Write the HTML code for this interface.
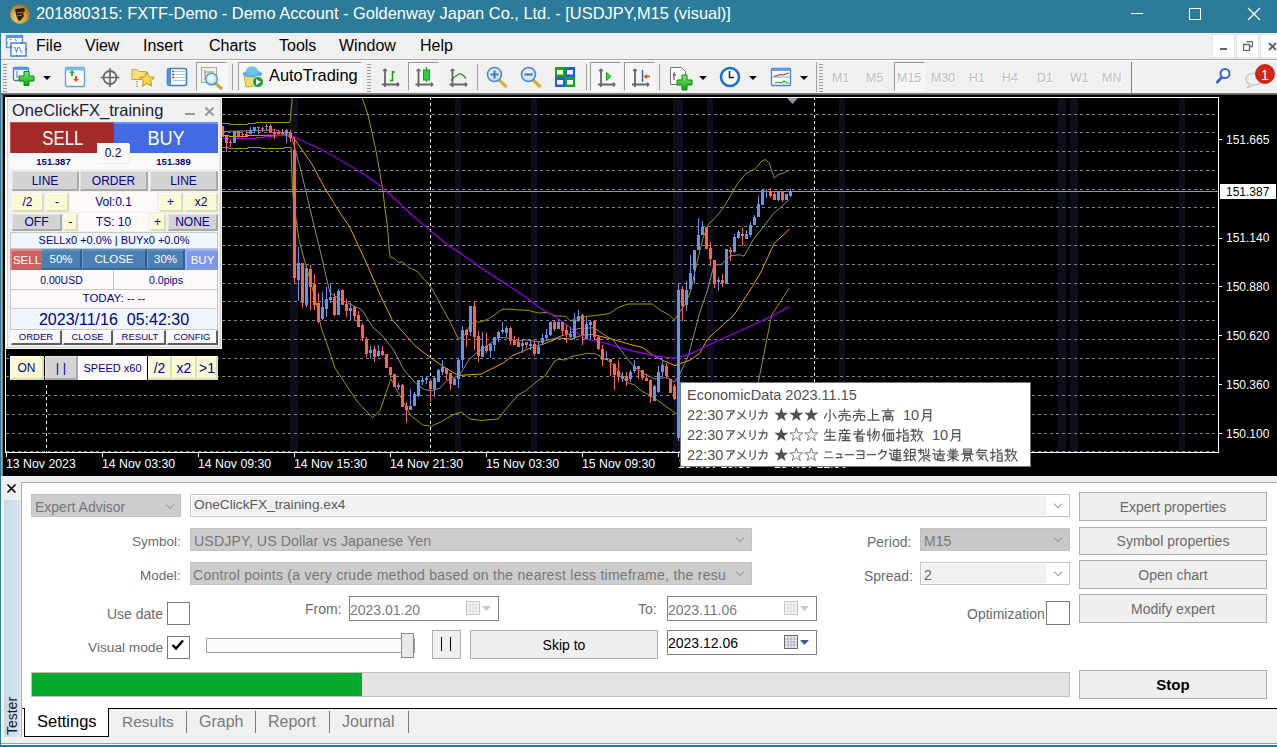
<!DOCTYPE html>
<html><head><meta charset="utf-8">
<style>
*{box-sizing:border-box;margin:0;padding:0}
html,body{width:1277px;height:747px;overflow:hidden;background:#f0f0f0;font-family:"Liberation Sans",sans-serif;position:relative}
.a{position:absolute}
.t{position:absolute;white-space:pre;line-height:1}
#title{left:0;top:0;width:1277px;height:33px;background:#2d7b9a;color:#fff}
#menu{left:0;top:33px;width:1277px;height:27px;background:#f0f0f0;border-bottom:1px solid #a8a8a8}
#tb{left:0;top:60px;width:1277px;height:34px;background:#f0f0f0;border-top:1px solid #fff;border-bottom:1px solid #787878}
#chart{left:3px;top:95px;width:1274px;height:381px;background:#000;overflow:hidden}
#tester{left:0;top:476px;width:1277px;height:271px;background:#f0f0f0}
.lb{position:absolute;left:0;top:0;width:1px;height:747px;background:#2d7b9a}
.m{font-size:16px;color:#000;top:5px}
.pb{position:absolute;border:1px solid;border-color:#9a9a9a #fafafa #fafafa #9a9a9a;background:#f5f5f5}
.grip{position:absolute;width:4px;background:repeating-linear-gradient(#9a9a9a 0 1px,transparent 1px 3px)}
.sep{position:absolute;width:1px;background:#a0a0a0;top:64px;height:26px}
.tf{position:absolute;top:72px;font-size:12.5px;color:#bdbdbd;white-space:pre;line-height:1;text-shadow:1px 1px 0 #fff}
.dd{position:absolute;width:0;height:0;border-left:4px solid transparent;border-right:4px solid transparent;border-top:4px solid #000}
</style></head><body>
<!-- TITLE -->
<div id="title" class="a">
 <svg class="a" style="left:9px;top:3px" width="22" height="22" viewBox="0 0 22 22">
  <defs><radialGradient id="gc" cx="0.4" cy="0.65" r="0.7"><stop offset="0" stop-color="#f3dc7c"/><stop offset="0.6" stop-color="#c99a3a"/><stop offset="1" stop-color="#8a6420"/></radialGradient></defs>
  <circle cx="11" cy="11" r="10" fill="url(#gc)"/>
  <path d="M6 6 L15 5 L16 8 L14 10 L15 13 L12 17 L10 18 L8 15 L7 11 Z" fill="#2a1a0a"/>
  <path d="M8 10 L14 9 M8 13 L13 12" stroke="#b08030" stroke-width="1"/>
 </svg>
 <div class="t" style="left:36px;top:5px;font-size:16.4px;color:#fff">201880315: FXTF-Demo - Demo Account - Goldenway Japan Co., Ltd. - [USDJPY,M15 (visual)]</div>
 <div class="a" style="left:1131px;top:13px;width:12px;height:1px;background:#fff"></div>
 <div class="a" style="left:1189px;top:8px;width:12px;height:12px;border:1px solid #fff"></div>
 <svg class="a" style="left:1247px;top:7px" width="14" height="14"><path d="M1 1 L13 13 M13 1 L1 13" stroke="#fff" stroke-width="1.2"/></svg>
</div>
<!-- MENU -->
<div id="menu" class="a">
 <svg class="a" style="left:2px;top:0px" width="28" height="26">
  <rect x="4.5" y="2.5" width="16" height="12" fill="#fff" stroke="#5a8ef0" stroke-width="1.4"/>
  <rect x="4" y="2" width="17" height="3" fill="#5a8ef0"/>
  <path d="M8 2.5 V4.5 M13 2.5 V4.5 M20.5 6 V8 M5 9 V11" stroke="#3a9a60" stroke-width="1"/>
  <path d="M7.5 6.5 h2 M13 6 l1.5 2" stroke="#5a8ef0" stroke-width="1.2"/>
  <rect x="9" y="10" width="15" height="13" fill="#fff" stroke="#5a8ef0" stroke-width="1.7"/>
  <path d="M9 13 V15 M14 22.8 H16 M19 10 H21 M24 15 V17" stroke="#3a8a60" stroke-width="1.6"/>
  <path d="M11.5 14.5 h1.5 l1.5 4.5 l1.5 -4.5 h1.5 l1.5 4.5 h2" stroke="#5a8ef0" stroke-width="1.1" fill="none"/>
 </svg>
 <div class="t m" style="left:36px">File</div>
 <div class="t m" style="left:85px">View</div>
 <div class="t m" style="left:143px">Insert</div>
 <div class="t m" style="left:209px">Charts</div>
 <div class="t m" style="left:279px">Tools</div>
 <div class="t m" style="left:339px">Window</div>
 <div class="t m" style="left:420px">Help</div>
 <div class="a" style="left:1212px;top:1px;width:23px;height:24px;background:#fff;border:1px solid #e4e4e4"></div>
 <div class="a" style="left:1236px;top:1px;width:23px;height:24px;background:#fff;border:1px solid #e4e4e4"></div>
 <div class="a" style="left:1260px;top:1px;width:20px;height:24px;background:#fff;border:1px solid #e4e4e4"></div>
 <div class="a" style="left:1220px;top:15px;width:7px;height:2px;background:#5a6878"></div>
 <svg class="a" style="left:1243px;top:8px" width="10" height="10"><path d="M3.5 0.5 H9.5 V5.5 H7 M0.5 3.5 H6.5 V9.5 H0.5 Z" stroke="#5a6878" stroke-width="1.3" fill="none"/></svg>
 <svg class="a" style="left:1268px;top:9px" width="9" height="9"><path d="M1 1 L8 8 M8 1 L1 8" stroke="#5a6878" stroke-width="2"/></svg>
</div>
<!-- TOOLBAR -->
<div id="tb" class="a"></div>
<div class="grip" style="left:3px;top:64px;height:28px"></div>
<div class="grip" style="left:367px;top:64px;height:28px"></div>
<div class="grip" style="left:819px;top:64px;height:28px"></div>
<div class="sep" style="left:232px"></div>
<div class="sep" style="left:477px"></div>
<div class="sep" style="left:586px"></div>
<div class="sep" style="left:659px"></div>
<div class="sep" style="left:816px;top:62px;height:30px"></div>
<div class="sep" style="left:1131px;top:62px;height:32px;background:#808080"></div>
<!-- pressed buttons -->
<div class="pb" style="left:196px;top:62px;width:31px;height:29px"></div>
<div class="pb" style="left:238px;top:62px;width:124px;height:29px"></div>
<div class="pb" style="left:408px;top:62px;width:31px;height:29px"></div>
<div class="pb" style="left:590px;top:62px;width:31px;height:29px"></div>
<div class="pb" style="left:624px;top:62px;width:31px;height:29px"></div>
<div class="pb" style="left:894px;top:62px;width:31px;height:29px"></div>
<div id="icons"><svg class="a" style="left:0;top:0" width="1277" height="94">
<defs>
<linearGradient id="gp" x1="0" y1="0" x2="0" y2="1"><stop offset="0" stop-color="#7cf07c"/><stop offset="1" stop-color="#10a010"/></linearGradient>
<radialGradient id="gm" cx="0.45" cy="0.4" r="0.6"><stop offset="0" stop-color="#ffffff"/><stop offset="1" stop-color="#b8dcf4"/></radialGradient>
</defs>
<!-- new chart -->
<rect x="13.5" y="67.5" width="15" height="13" rx="1.5" fill="#f4f8fc" stroke="#3c7cd0" stroke-width="1.3"/>
<rect x="13.5" y="67.5" width="15" height="2.5" fill="#5a9ae8"/>
<path d="M17 71 V78" stroke="#7090b0" stroke-width="1.2"/>
<path d="M19 76 H24 V71.5 H29 V76 H34 V81 H29 V85.5 H24 V81 H19 Z" fill="url(#gp)" stroke="#0a8a0a" stroke-width="1"/>
<!-- market watch -->
<rect x="65.5" y="67.5" width="19" height="19" rx="2" fill="#fff" stroke="#60a0e0" stroke-width="1.4"/>
<rect x="65.5" y="67.5" width="19" height="3" fill="#80b8f0"/>
<path d="M69 73 l3 -3 l3 3 h-2 v3 h-2 v-3 z" fill="#20b020"/>
<path d="M73 79 l3 3 l3 -3 h-2 v-3 h-2 v3 z" fill="#e05020"/>
<path d="M70 82 H82 M76 74 H82 M70 78 H74" stroke="#e0e0e0" stroke-width="0.8"/>
<!-- crosshair -->
<circle cx="110" cy="77.5" r="6.5" fill="none" stroke="#666" stroke-width="1.8"/>
<path d="M100.5 77.5 H119.5 M110 68 V87" stroke="#666" stroke-width="1.6"/>
<!-- folder star -->
<path d="M132 69.5 h5 l2 2 h7 v8 h-14 z" fill="#f4e07a" stroke="#c8a840" stroke-width="1"/>
<path d="M147 72 l2.3 4.8 5.2 0.6 -3.9 3.5 1.1 5.2 -4.7 -2.7 -4.7 2.7 1.1 -5.2 -3.9 -3.5 5.2 -0.6z" fill="#f6d64a" stroke="#c09020" stroke-width="1"/>
<path d="M137 81 V88" stroke="#444" stroke-width="1" stroke-dasharray="1 1.5"/>
<!-- terminal -->
<rect x="167.5" y="68.5" width="19" height="17" rx="2" fill="#fff" stroke="#3c7cd0" stroke-width="1.6"/>
<rect x="167.5" y="68.5" width="3.5" height="17" fill="#5090d8"/>
<path d="M173 71.5 H185 M173 74.5 H185 M173 77.5 H185 M173 80.5 H185" stroke="#a8c8f0" stroke-width="1"/>
<path d="M172 71.5 h2 M172 77.5 h2" stroke="#e03030" stroke-width="1.3"/>
<path d="M172 74.5 h2" stroke="#305030" stroke-width="1.3"/>
<!-- tester -->
<rect x="201.5" y="67.5" width="15" height="15" fill="#f4f0e8" stroke="#b0a890" stroke-width="1"/>
<path d="M205 70 V80 M205 72 H214" stroke="#8a8a8a" stroke-width="1"/>
<path d="M215 83 L222 89" stroke="#d0a820" stroke-width="3"/>
<circle cx="211.5" cy="79" r="5.8" fill="url(#gm)" stroke="#5a9ad0" stroke-width="1.5"/>
<!-- autotrading -->
<path d="M244 76 L258 76 L256 86 L246 87 Z" fill="#f2dc5a" stroke="#b89a30" stroke-width="0.8"/>
<ellipse cx="252.5" cy="74" rx="10" ry="3.5" fill="#5ab0e0"/>
<ellipse cx="252" cy="71" rx="6" ry="4.5" fill="#70c0ec"/>
<circle cx="258" cy="82" r="5.5" fill="#18a030" stroke="#fff" stroke-width="0.8"/>
<path d="M256 79 L261 82 L256 85 Z" fill="#fff"/>
<!-- bar chart -->
<path d="M385 70 V87 M382 84.5 H399" stroke="#666" stroke-width="1.8"/>
<path d="M383 71 l2 -2 l2 2 M397 82.5 l2 2 l-2 2" stroke="#666" stroke-width="1.2" fill="none"/>
<path d="M392.5 71 V81.5 M392.5 72 h2.5 M390 80.5 h2.5" stroke="#18a018" stroke-width="1.5"/>
<!-- candle -->
<path d="M418.5 70 V87 M415.5 84.5 H433" stroke="#666" stroke-width="1.8"/>
<path d="M416.5 71 l2 -2 l2 2 M431 82.5 l2 2 l-2 2" stroke="#666" stroke-width="1.2" fill="none"/>
<path d="M426.5 67 V82" stroke="#10a010" stroke-width="1.2"/>
<rect x="423.5" y="70" width="6" height="10" fill="#30d040" stroke="#10a010" stroke-width="1"/>
<!-- line -->
<path d="M452.5 70 V87 M449.5 84.5 H467" stroke="#666" stroke-width="1.8"/>
<path d="M450.5 71 l2 -2 l2 2 M465 82.5 l2 2 l-2 2" stroke="#666" stroke-width="1.2" fill="none"/>
<path d="M451 80.5 Q455 76 459 74 Q462 73 466 78.5" stroke="#2a8a2a" stroke-width="1.3" fill="none"/>
<!-- zoom in / out -->
<path d="M499 80 L506.5 87" stroke="#d4b030" stroke-width="3.2"/>
<circle cx="494.5" cy="74.5" r="7" fill="url(#gm)" stroke="#4a8ad0" stroke-width="1.6"/>
<path d="M490.5 74.5 H498.5 M494.5 70.5 V78.5" stroke="#3a78b8" stroke-width="2.2"/>
<path d="M533 80 L540.5 87" stroke="#d4b030" stroke-width="3.2"/>
<circle cx="528.5" cy="74.5" r="7" fill="url(#gm)" stroke="#4a8ad0" stroke-width="1.6"/>
<path d="M524.5 74.5 H532.5" stroke="#3a78b8" stroke-width="2.2"/>
<!-- tile -->
<rect x="555" y="67" width="10" height="10" fill="#20a020"/><rect x="565" y="67" width="10" height="10" fill="#2060d8"/>
<rect x="555" y="77" width="10" height="10" fill="#2060d8"/><rect x="565" y="77" width="10" height="10" fill="#20a020"/>
<rect x="557" y="70" width="6" height="4.5" fill="#f0fff0"/><rect x="567" y="70" width="6" height="4.5" fill="#f0f4ff"/>
<rect x="557" y="80" width="6" height="4.5" fill="#f0f4ff"/><rect x="567" y="80" width="6" height="4.5" fill="#f0fff0"/>
<!-- autoscroll -->
<path d="M601 70 V87 M598 84.5 H615" stroke="#666" stroke-width="1.8"/>
<path d="M599 71 l2 -2 l2 2 M613 82.5 l2 2 l-2 2" stroke="#666" stroke-width="1.2" fill="none"/>
<path d="M606.5 72.5 L611 76.5 L606.5 80.5 Z" fill="#40d040" stroke="#18a018" stroke-width="1"/>
<!-- chart shift -->
<path d="M635 70 V87 M632 84.5 H649" stroke="#666" stroke-width="1.8"/>
<path d="M633 71 l2 -2 l2 2 M647 82.5 l2 2 l-2 2" stroke="#666" stroke-width="1.2" fill="none"/>
<path d="M642.5 70 V82" stroke="#2060a0" stroke-width="1.4"/>
<path d="M643.5 76.5 L647 74 V75.8 H650 V77.2 H647 V79 Z" fill="#e05010"/>
<!-- indicators -->
<path d="M670.5 67.5 h11 l4 4 v13 h-15 z" fill="#fafafa" stroke="#777" stroke-width="1"/>
<path d="M675 72 q-1 0 -1 2 v6 M673 75 h3" stroke="#444" stroke-width="1" fill="none"/>
<path d="M677 80 H682 V75 H687 V80 H692 V85 H687 V90 H682 V85 H677 Z" fill="url(#gp)" stroke="#0a8a0a" stroke-width="1"/>
<!-- clock -->
<circle cx="730" cy="77" r="9" fill="#f8f8f8" stroke="#1a70d0" stroke-width="2.6"/>
<path d="M729.5 71 V77.5 H734" stroke="#222" stroke-width="1.4" fill="none"/>
<!-- template -->
<rect x="771.5" y="68.5" width="19" height="17" rx="1" fill="#fff" stroke="#4a88d0" stroke-width="1.4"/>
<rect x="771.5" y="68.5" width="19" height="2.5" fill="#6aa0e0"/>
<path d="M772 77 H790" stroke="#90b8e8" stroke-width="1.2"/>
<path d="M774 76 l3 0 l3 -1.5 l3 0.5 l3 -1 l3 -1" stroke="#b03010" stroke-width="1.1" fill="none"/>
<path d="M775 83 l3 -1 l3 1 l3 -2 l3 2 l2 0" stroke="#20a020" stroke-width="1.1" fill="none"/>
<!-- search -->
<circle cx="1225" cy="73.5" r="4.5" fill="#fff" stroke="#2a68c8" stroke-width="2"/>
<path d="M1222 77 L1216.5 83" stroke="#2a68c8" stroke-width="2.6"/>
<!-- chat -->
<ellipse cx="1254" cy="79" rx="8" ry="6" fill="#f0f0f0" stroke="#c0c0c0" stroke-width="1.2"/>
<path d="M1250 84 L1247 88 L1254 85" fill="#f0f0f0" stroke="#c0c0c0" stroke-width="1"/>
<circle cx="1265" cy="74" r="9.5" fill="#d02818"/>
<circle cx="1265" cy="74" r="9.5" fill="none" stroke="#b01808" stroke-width="0.8"/>
<text x="1265" y="79.5" text-anchor="middle" font-family="Liberation Sans" font-size="14" fill="#fff">1</text>
</svg></div>
<div class="t" style="left:269px;top:67px;font-size:16.4px;color:#000">AutoTrading</div>
<div class="tf" style="left:832px">M1</div>
<div class="tf" style="left:866px">M5</div>
<div class="tf" style="left:897px">M15</div>
<div class="tf" style="left:931px">M30</div>
<div class="tf" style="left:969px">H1</div>
<div class="tf" style="left:1002px">H4</div>
<div class="tf" style="left:1037px">D1</div>
<div class="tf" style="left:1070px">W1</div>
<div class="tf" style="left:1102px">MN</div>
<div class="dd" style="left:43px;top:76px"></div>
<div class="dd" style="left:699px;top:76px"></div>
<div class="dd" style="left:749px;top:76px"></div>
<div class="dd" style="left:800px;top:76px"></div>

<!-- CHART -->
<div id="chart" class="a"></div>
<div class="a" style="left:1px;top:94px;width:2px;height:382px;background:linear-gradient(90deg,#b4b4b4,#6a6a6a)"></div>
<div class="a" style="left:1px;top:94px;width:1276px;height:1px;background:#5a5a5a"></div>
<svg class="a" style="left:0;top:0" width="1277" height="476" shape-rendering="crispEdges">
<defs><clipPath id="cc"><rect x="7" y="98" width="1211" height="354"/></clipPath></defs>
<rect x="290" y="98" width="8" height="354" fill="#0e0e1c"/>
<rect x="455" y="98" width="6" height="354" fill="#0e0e1c"/>
<rect x="531" y="98" width="6" height="354" fill="#0e0e1c"/>
<rect x="673" y="98" width="10" height="354" fill="#0e0e1c"/>
<rect x="707" y="98" width="6" height="354" fill="#0e0e1c"/>
<rect x="839" y="98" width="6" height="354" fill="#0e0e1c"/>
<rect x="1058" y="98" width="8" height="354" fill="#0e0e1c"/>
<rect x="1070" y="98" width="8" height="354" fill="#0e0e1c"/>
<rect x="1179" y="98" width="6" height="354" fill="#0e0e1c"/>
<line x1="6" y1="114.5" x2="1218" y2="114.5" stroke="#778899" stroke-width="1" stroke-dasharray="3 3" stroke-dashoffset="0"/>
<line x1="6" y1="132.5" x2="1218" y2="132.5" stroke="#778899" stroke-width="1" stroke-dasharray="3 3" stroke-dashoffset="0"/>
<line x1="6" y1="151.5" x2="1218" y2="151.5" stroke="#778899" stroke-width="1" stroke-dasharray="3 3" stroke-dashoffset="0"/>
<line x1="6" y1="170.5" x2="1218" y2="170.5" stroke="#778899" stroke-width="1" stroke-dasharray="3 3" stroke-dashoffset="0"/>
<line x1="6" y1="189.5" x2="1218" y2="189.5" stroke="#778899" stroke-width="1" stroke-dasharray="3 3" stroke-dashoffset="0"/>
<line x1="6" y1="207.5" x2="1218" y2="207.5" stroke="#778899" stroke-width="1" stroke-dasharray="3 3" stroke-dashoffset="0"/>
<line x1="6" y1="226.5" x2="1218" y2="226.5" stroke="#778899" stroke-width="1" stroke-dasharray="3 3" stroke-dashoffset="0"/>
<line x1="6" y1="245.5" x2="1218" y2="245.5" stroke="#778899" stroke-width="1" stroke-dasharray="3 3" stroke-dashoffset="0"/>
<line x1="6" y1="264.5" x2="1218" y2="264.5" stroke="#778899" stroke-width="1" stroke-dasharray="3 3" stroke-dashoffset="0"/>
<line x1="6" y1="283.5" x2="1218" y2="283.5" stroke="#778899" stroke-width="1" stroke-dasharray="3 3" stroke-dashoffset="0"/>
<line x1="6" y1="301.5" x2="1218" y2="301.5" stroke="#778899" stroke-width="1" stroke-dasharray="3 3" stroke-dashoffset="0"/>
<line x1="6" y1="320.5" x2="1218" y2="320.5" stroke="#778899" stroke-width="1" stroke-dasharray="3 3" stroke-dashoffset="0"/>
<line x1="6" y1="339.5" x2="1218" y2="339.5" stroke="#778899" stroke-width="1" stroke-dasharray="3 3" stroke-dashoffset="0"/>
<line x1="6" y1="358.5" x2="1218" y2="358.5" stroke="#778899" stroke-width="1" stroke-dasharray="3 3" stroke-dashoffset="0"/>
<line x1="6" y1="376.5" x2="1218" y2="376.5" stroke="#778899" stroke-width="1" stroke-dasharray="3 3" stroke-dashoffset="0"/>
<line x1="6" y1="395.5" x2="1218" y2="395.5" stroke="#778899" stroke-width="1" stroke-dasharray="3 3" stroke-dashoffset="0"/>
<line x1="6" y1="414.5" x2="1218" y2="414.5" stroke="#778899" stroke-width="1" stroke-dasharray="3 3" stroke-dashoffset="0"/>
<line x1="6" y1="433.5" x2="1218" y2="433.5" stroke="#778899" stroke-width="1" stroke-dasharray="3 3" stroke-dashoffset="0"/>
<line x1="6" y1="451.5" x2="1218" y2="451.5" stroke="#778899" stroke-width="1" stroke-dasharray="3 3" stroke-dashoffset="0"/>
<line x1="46.5" y1="385" x2="46.5" y2="452" stroke="#ffffff" stroke-width="1" stroke-dasharray="3 3"/>
<line x1="430.5" y1="97" x2="430.5" y2="452" stroke="#ffffff" stroke-width="1" stroke-dasharray="3 3"/>
<line x1="814.5" y1="97" x2="814.5" y2="452" stroke="#ffffff" stroke-width="1" stroke-dasharray="3 3"/>
<line x1="6" y1="191.5" x2="1218" y2="191.5" stroke="#8a9aaa" stroke-width="1"/>
<g clip-path="url(#cc)" fill="none" stroke-width="1" shape-rendering="auto">
<polyline points="222.0,123.5 229.0,123.5 229.0,124.5 248.0,124.5 248.0,123.5 256.0,123.5 256.0,122.5 290.0,122.5 293.0,90.0 360.0,90.0 362.0,97.0 368.0,115.0 372.0,132.5 376.0,151.2 379.4,170.0 382.8,190.0 384.8,207.4 387.4,226.0 388.8,244.9 390.1,257.0 394.1,258.3 398.8,263.0 402.2,261.6 410.2,268.3 417.6,271.7 424.3,279.7 428.2,283.4 433.5,291.4 442.9,308.8 451.0,323.5 458.3,339.0 464.3,335.6 471.0,323.5 476.4,322.2 481.5,321.8 489.5,318.4 501.6,309.7 505.6,309.0 528.0,310.4 538.8,313.0 546.8,312.4 554.9,315.8 566.2,316.4 570.3,321.1 576.3,318.4 587.0,316.4 604.0,314.4 609.4,313.4 620.0,306.7 628.0,304.0 652.2,304.0 660.2,310.0 669.6,315.4 674.3,320.0 679.0,312.8 685.7,303.4 691.0,290.0 694.8,272.2 702.8,238.8 708.1,224.7 714.8,218.0 722.9,208.7 728.0,200.0 738.0,182.8 746.0,173.4 751.4,170.7 755.4,168.7 761.4,161.4 765.4,159.4 769.4,163.4 771.4,169.4 774.1,178.1 778.1,174.7 784.8,172.7 789.5,170.0" stroke="#a09600"/>
<polyline points="222.0,147.5 229.0,147.5 229.0,148.5 248.0,148.5 248.0,147.5 261.0,147.5 261.0,148.5 284.0,148.5 284.0,147.5 291.0,147.5 292.5,190.0 294.0,205.0 299.0,240.0 303.0,255.0 311.0,283.0 317.0,306.0 321.0,327.0 329.0,350.0 335.0,368.0 357.5,402.0 372.7,417.6 380.0,410.6 390.8,378.8 404.0,403.0 410.8,415.6 422.9,425.0 431.0,426.3 440.0,422.3 453.0,414.8 461.5,412.0 470.0,419.0 481.2,420.4 498.0,419.0 509.3,405.0 518.7,394.8 526.7,390.0 536.1,382.0 545.5,375.4 554.9,360.6 558.9,359.3 565.6,360.0 571.0,356.6 587.0,353.3 596.4,354.0 603.0,358.6 606.7,359.6 613.4,365.0 620.0,373.0 626.8,382.4 634.8,385.0 640.0,390.0 653.9,397.8 672.7,411.2 680.7,416.6 700.0,425.0 740.0,420.0 758.4,381.8 771.7,314.8 777.0,306.8 789.2,288.0" stroke="#a09600"/>
<polyline points="222.0,135.5 229.0,135.5 229.0,136.5 248.0,136.5 248.0,135.5 291.0,135.0 293.0,137.0 311.4,163.2 325.3,188.9 338.2,210.0 349.6,226.8 367.0,264.3 379.0,292.4 392.0,319.5 409.5,339.6 414.8,345.6 429.5,357.0 447.0,369.0 458.7,375.5 481.2,374.0 503.7,362.8 512.0,355.9 530.7,347.9 544.1,343.9 558.9,337.9 571.0,339.2 581.6,335.2 592.4,334.5 604.0,337.2 613.4,339.5 626.8,343.5 642.8,347.6 653.5,355.6 664.3,361.0 675.0,365.6 680.3,363.6 691.0,359.6 700.0,353.0 707.5,339.0 734.2,314.8 753.0,285.4 761.0,272.0 774.1,243.6 789.5,229.0" stroke="#f0a000"/>
<polyline points="222.0,131.5 240.0,131.0 256.0,130.5 276.0,130.0 292.0,138.0 300.7,169.6 310.3,210.0 320.0,250.0 330.0,293.0 341.0,299.5 354.0,306.0 362.0,310.0 373.0,327.6 380.0,333.0 393.0,349.0 404.0,370.0 416.0,383.5 424.2,389.5 432.2,390.9 440.0,388.0 446.7,380.6 459.4,375.3 469.4,359.2 476.1,353.2 494.9,340.5 498.9,337.5 506.9,337.8 516.0,341.2 525.4,339.9 540.1,341.9 552.2,339.2 561.6,335.8 569.6,333.8 577.6,328.5 593.7,327.8 604.0,334.5 613.4,340.2 624.0,354.3 633.5,366.3 642.8,373.0 655.0,379.0 664.3,377.7 669.6,378.4 674.3,382.4 680.3,373.0 688.4,355.6 699.7,312.8 707.5,290.0 713.5,266.9 716.2,264.9 721.5,264.2 730.9,255.5 740.3,254.8 744.0,256.2 753.0,240.0 763.4,226.9 772.8,214.2 782.1,206.2 789.5,199.2" stroke="#8c8c8c"/>
<polyline points="222.0,138.5 229.0,138.5 232.0,139.5 235.0,138.5 256.0,138.5 256.0,137.5 264.0,137.5 264.0,136.5 276.0,136.5 276.0,135.5 292.0,136.0 325.3,151.4 356.4,169.6 370.0,178.2 385.4,190.0 410.9,214.0 429.6,230.2 445.7,243.5 459.0,252.2 481.2,268.0 522.7,295.0 538.8,307.0 558.9,319.1 572.3,329.2 585.7,339.2 604.0,342.5 620.0,347.6 636.0,351.6 653.5,355.6 673.6,358.3 685.7,355.6 700.0,349.6 707.5,345.6 734.2,333.6 771.7,316.2 789.0,306.8" stroke="#a000f0" stroke-width="1.1"/>
</g>
<g clip-path="url(#cc)">
<rect x="222" y="126" width="1" height="11" fill="#ff6347"/>
<rect x="221" y="126" width="3" height="11" fill="#ff6347"/>
<rect x="226" y="136" width="1" height="16" fill="#ff6347"/>
<rect x="225" y="136" width="3" height="7" fill="#ff6347"/>
<rect x="230" y="140" width="1" height="7" fill="#ff6347"/>
<rect x="229" y="142" width="3" height="1" fill="#ff6347"/>
<rect x="234" y="131" width="1" height="12" fill="#6495ed"/>
<rect x="233" y="131" width="3" height="12" fill="#6495ed"/>
<rect x="238" y="131" width="1" height="7" fill="#ff6347"/>
<rect x="237" y="131" width="3" height="5" fill="#ff6347"/>
<rect x="242" y="133" width="1" height="5" fill="#ff6347"/>
<rect x="241" y="134" width="3" height="1" fill="#ff6347"/>
<rect x="246" y="131" width="1" height="4" fill="#ff6347"/>
<rect x="245" y="134" width="3" height="2" fill="#ff6347"/>
<rect x="250" y="127" width="1" height="7" fill="#6495ed"/>
<rect x="249" y="130" width="3" height="4" fill="#6495ed"/>
<rect x="254" y="127" width="1" height="5" fill="#6495ed"/>
<rect x="253" y="127" width="3" height="4" fill="#6495ed"/>
<rect x="258" y="127" width="1" height="7" fill="#6495ed"/>
<rect x="257" y="127" width="3" height="1" fill="#6495ed"/>
<rect x="262" y="127" width="1" height="5" fill="#ff6347"/>
<rect x="261" y="128" width="3" height="1" fill="#ff6347"/>
<rect x="266" y="124" width="1" height="6" fill="#6495ed"/>
<rect x="265" y="126" width="3" height="1" fill="#6495ed"/>
<rect x="270" y="124" width="1" height="9" fill="#ff6347"/>
<rect x="269" y="126" width="3" height="7" fill="#ff6347"/>
<rect x="274" y="129" width="1" height="10" fill="#ff6347"/>
<rect x="273" y="132" width="3" height="2" fill="#ff6347"/>
<rect x="278" y="130" width="1" height="4" fill="#ff6347"/>
<rect x="277" y="132" width="3" height="2" fill="#ff6347"/>
<rect x="282" y="129" width="1" height="5" fill="#ff6347"/>
<rect x="281" y="132" width="3" height="2" fill="#ff6347"/>
<rect x="286" y="129" width="1" height="14" fill="#6495ed"/>
<rect x="285" y="130" width="3" height="4" fill="#6495ed"/>
<rect x="290" y="130" width="1" height="12" fill="#ff6347"/>
<rect x="289" y="132" width="3" height="6" fill="#ff6347"/>
<rect x="294" y="137" width="1" height="146" fill="#ff6347"/>
<rect x="293" y="150" width="3" height="128" fill="#ff6347"/>
<rect x="298" y="247" width="1" height="54" fill="#6495ed"/>
<rect x="297" y="263" width="3" height="17" fill="#6495ed"/>
<rect x="302" y="263" width="1" height="45" fill="#ff6347"/>
<rect x="301" y="263" width="3" height="40" fill="#ff6347"/>
<rect x="306" y="268" width="1" height="39" fill="#6495ed"/>
<rect x="305" y="268" width="3" height="37" fill="#6495ed"/>
<rect x="310" y="265" width="1" height="45" fill="#ff6347"/>
<rect x="309" y="269" width="3" height="18" fill="#ff6347"/>
<rect x="314" y="274" width="1" height="36" fill="#ff6347"/>
<rect x="313" y="284" width="3" height="21" fill="#ff6347"/>
<rect x="318" y="293" width="1" height="30" fill="#ff6347"/>
<rect x="317" y="303" width="3" height="19" fill="#ff6347"/>
<rect x="322" y="292" width="1" height="28" fill="#6495ed"/>
<rect x="321" y="307" width="3" height="12" fill="#6495ed"/>
<rect x="326" y="287" width="1" height="30" fill="#6495ed"/>
<rect x="325" y="299" width="3" height="10" fill="#6495ed"/>
<rect x="330" y="283" width="1" height="20" fill="#6495ed"/>
<rect x="329" y="297" width="3" height="3" fill="#6495ed"/>
<rect x="334" y="293" width="1" height="23" fill="#ff6347"/>
<rect x="333" y="297" width="3" height="18" fill="#ff6347"/>
<rect x="338" y="289" width="1" height="26" fill="#6495ed"/>
<rect x="337" y="291" width="3" height="24" fill="#6495ed"/>
<rect x="342" y="289" width="1" height="16" fill="#ff6347"/>
<rect x="341" y="290" width="3" height="15" fill="#ff6347"/>
<rect x="346" y="299" width="1" height="18" fill="#ff6347"/>
<rect x="345" y="304" width="3" height="7" fill="#ff6347"/>
<rect x="350" y="303" width="1" height="17" fill="#6495ed"/>
<rect x="349" y="308" width="3" height="3" fill="#6495ed"/>
<rect x="354" y="306" width="1" height="14" fill="#ff6347"/>
<rect x="353" y="307" width="3" height="9" fill="#ff6347"/>
<rect x="358" y="311" width="1" height="16" fill="#ff6347"/>
<rect x="357" y="315" width="3" height="12" fill="#ff6347"/>
<rect x="362" y="323" width="1" height="18" fill="#ff6347"/>
<rect x="361" y="325" width="3" height="13" fill="#ff6347"/>
<rect x="366" y="337" width="1" height="20" fill="#ff6347"/>
<rect x="365" y="339" width="3" height="15" fill="#ff6347"/>
<rect x="370" y="346" width="1" height="13" fill="#6495ed"/>
<rect x="369" y="350" width="3" height="3" fill="#6495ed"/>
<rect x="374" y="346" width="1" height="16" fill="#ff6347"/>
<rect x="373" y="349" width="3" height="8" fill="#ff6347"/>
<rect x="378" y="345" width="1" height="12" fill="#6495ed"/>
<rect x="377" y="351" width="3" height="5" fill="#6495ed"/>
<rect x="382" y="346" width="1" height="10" fill="#ff6347"/>
<rect x="381" y="351" width="3" height="4" fill="#ff6347"/>
<rect x="386" y="354" width="1" height="14" fill="#ff6347"/>
<rect x="385" y="354" width="3" height="14" fill="#ff6347"/>
<rect x="390" y="367" width="1" height="11" fill="#ff6347"/>
<rect x="389" y="367" width="3" height="8" fill="#ff6347"/>
<rect x="394" y="374" width="1" height="13" fill="#ff6347"/>
<rect x="393" y="374" width="3" height="13" fill="#ff6347"/>
<rect x="398" y="383" width="1" height="7" fill="#6495ed"/>
<rect x="397" y="385" width="3" height="2" fill="#6495ed"/>
<rect x="402" y="384" width="1" height="23" fill="#ff6347"/>
<rect x="401" y="385" width="3" height="22" fill="#ff6347"/>
<rect x="406" y="402" width="1" height="21" fill="#ff6347"/>
<rect x="405" y="406" width="3" height="4" fill="#ff6347"/>
<rect x="410" y="389" width="1" height="21" fill="#6495ed"/>
<rect x="409" y="406" width="3" height="4" fill="#6495ed"/>
<rect x="414" y="392" width="1" height="14" fill="#6495ed"/>
<rect x="413" y="394" width="3" height="12" fill="#6495ed"/>
<rect x="418" y="380" width="1" height="17" fill="#6495ed"/>
<rect x="417" y="380" width="3" height="16" fill="#6495ed"/>
<rect x="422" y="377" width="1" height="8" fill="#6495ed"/>
<rect x="421" y="380" width="3" height="2" fill="#6495ed"/>
<rect x="426" y="376" width="1" height="8" fill="#6495ed"/>
<rect x="425" y="378" width="3" height="2" fill="#6495ed"/>
<rect x="430" y="379" width="1" height="23" fill="#ff6347"/>
<rect x="429" y="381" width="3" height="8" fill="#ff6347"/>
<rect x="434" y="376" width="1" height="21" fill="#6495ed"/>
<rect x="433" y="378" width="3" height="11" fill="#6495ed"/>
<rect x="438" y="369" width="1" height="13" fill="#6495ed"/>
<rect x="437" y="370" width="3" height="12" fill="#6495ed"/>
<rect x="442" y="360" width="1" height="15" fill="#6495ed"/>
<rect x="441" y="367" width="3" height="5" fill="#6495ed"/>
<rect x="446" y="368" width="1" height="12" fill="#ff6347"/>
<rect x="445" y="368" width="3" height="6" fill="#ff6347"/>
<rect x="450" y="373" width="1" height="17" fill="#ff6347"/>
<rect x="449" y="373" width="3" height="11" fill="#ff6347"/>
<rect x="454" y="378" width="1" height="7" fill="#6495ed"/>
<rect x="453" y="379" width="3" height="6" fill="#6495ed"/>
<rect x="458" y="358" width="1" height="30" fill="#6495ed"/>
<rect x="457" y="360" width="3" height="19" fill="#6495ed"/>
<rect x="462" y="326" width="1" height="42" fill="#6495ed"/>
<rect x="461" y="330" width="3" height="30" fill="#6495ed"/>
<rect x="466" y="329" width="1" height="18" fill="#ff6347"/>
<rect x="465" y="330" width="3" height="5" fill="#ff6347"/>
<rect x="470" y="306" width="1" height="30" fill="#6495ed"/>
<rect x="469" y="306" width="3" height="26" fill="#6495ed"/>
<rect x="474" y="301" width="1" height="49" fill="#ff6347"/>
<rect x="473" y="306" width="3" height="31" fill="#ff6347"/>
<rect x="478" y="331" width="1" height="31" fill="#ff6347"/>
<rect x="477" y="336" width="3" height="20" fill="#ff6347"/>
<rect x="482" y="332" width="1" height="25" fill="#6495ed"/>
<rect x="481" y="346" width="3" height="11" fill="#6495ed"/>
<rect x="486" y="333" width="1" height="20" fill="#ff6347"/>
<rect x="485" y="346" width="3" height="5" fill="#ff6347"/>
<rect x="490" y="343" width="1" height="15" fill="#6495ed"/>
<rect x="489" y="344" width="3" height="7" fill="#6495ed"/>
<rect x="494" y="337" width="1" height="14" fill="#6495ed"/>
<rect x="493" y="337" width="3" height="8" fill="#6495ed"/>
<rect x="498" y="331" width="1" height="11" fill="#6495ed"/>
<rect x="497" y="332" width="3" height="6" fill="#6495ed"/>
<rect x="502" y="322" width="1" height="12" fill="#6495ed"/>
<rect x="501" y="330" width="3" height="2" fill="#6495ed"/>
<rect x="506" y="326" width="1" height="11" fill="#6495ed"/>
<rect x="505" y="328" width="3" height="5" fill="#6495ed"/>
<rect x="510" y="327" width="1" height="18" fill="#ff6347"/>
<rect x="509" y="328" width="3" height="13" fill="#ff6347"/>
<rect x="514" y="336" width="1" height="9" fill="#ff6347"/>
<rect x="513" y="340" width="3" height="5" fill="#ff6347"/>
<rect x="518" y="337" width="1" height="10" fill="#ff6347"/>
<rect x="517" y="342" width="3" height="5" fill="#ff6347"/>
<rect x="522" y="340" width="1" height="13" fill="#6495ed"/>
<rect x="521" y="343" width="3" height="3" fill="#6495ed"/>
<rect x="526" y="342" width="1" height="6" fill="#ff6347"/>
<rect x="525" y="342" width="3" height="3" fill="#ff6347"/>
<rect x="530" y="341" width="1" height="9" fill="#6495ed"/>
<rect x="529" y="344" width="3" height="2" fill="#6495ed"/>
<rect x="534" y="341" width="1" height="15" fill="#ff6347"/>
<rect x="533" y="344" width="3" height="10" fill="#ff6347"/>
<rect x="538" y="342" width="1" height="12" fill="#6495ed"/>
<rect x="537" y="347" width="3" height="7" fill="#6495ed"/>
<rect x="542" y="334" width="1" height="11" fill="#6495ed"/>
<rect x="541" y="338" width="3" height="5" fill="#6495ed"/>
<rect x="546" y="329" width="1" height="10" fill="#6495ed"/>
<rect x="545" y="335" width="3" height="3" fill="#6495ed"/>
<rect x="550" y="321" width="1" height="15" fill="#6495ed"/>
<rect x="549" y="322" width="3" height="13" fill="#6495ed"/>
<rect x="554" y="320" width="1" height="11" fill="#ff6347"/>
<rect x="553" y="322" width="3" height="7" fill="#ff6347"/>
<rect x="558" y="319" width="1" height="10" fill="#6495ed"/>
<rect x="557" y="322" width="3" height="7" fill="#6495ed"/>
<rect x="562" y="322" width="1" height="14" fill="#ff6347"/>
<rect x="561" y="322" width="3" height="9" fill="#ff6347"/>
<rect x="566" y="325" width="1" height="18" fill="#ff6347"/>
<rect x="565" y="330" width="3" height="4" fill="#ff6347"/>
<rect x="570" y="327" width="1" height="11" fill="#6495ed"/>
<rect x="569" y="334" width="3" height="3" fill="#6495ed"/>
<rect x="574" y="313" width="1" height="27" fill="#6495ed"/>
<rect x="573" y="320" width="3" height="17" fill="#6495ed"/>
<rect x="578" y="310" width="1" height="12" fill="#6495ed"/>
<rect x="577" y="316" width="3" height="5" fill="#6495ed"/>
<rect x="582" y="314" width="1" height="31" fill="#ff6347"/>
<rect x="581" y="315" width="3" height="20" fill="#ff6347"/>
<rect x="586" y="317" width="1" height="22" fill="#6495ed"/>
<rect x="585" y="324" width="3" height="15" fill="#6495ed"/>
<rect x="590" y="321" width="1" height="18" fill="#6495ed"/>
<rect x="589" y="322" width="3" height="3" fill="#6495ed"/>
<rect x="594" y="320" width="1" height="20" fill="#ff6347"/>
<rect x="593" y="321" width="3" height="16" fill="#ff6347"/>
<rect x="598" y="335" width="1" height="15" fill="#ff6347"/>
<rect x="597" y="337" width="3" height="12" fill="#ff6347"/>
<rect x="602" y="345" width="1" height="21" fill="#ff6347"/>
<rect x="601" y="349" width="3" height="11" fill="#ff6347"/>
<rect x="606" y="351" width="1" height="9" fill="#6495ed"/>
<rect x="605" y="358" width="3" height="2" fill="#6495ed"/>
<rect x="610" y="359" width="1" height="17" fill="#ff6347"/>
<rect x="609" y="359" width="3" height="3" fill="#ff6347"/>
<rect x="614" y="363" width="1" height="27" fill="#ff6347"/>
<rect x="613" y="364" width="3" height="11" fill="#ff6347"/>
<rect x="618" y="361" width="1" height="21" fill="#ff6347"/>
<rect x="617" y="371" width="3" height="6" fill="#ff6347"/>
<rect x="622" y="372" width="1" height="10" fill="#6495ed"/>
<rect x="621" y="376" width="3" height="3" fill="#6495ed"/>
<rect x="626" y="372" width="1" height="14" fill="#ff6347"/>
<rect x="625" y="376" width="3" height="5" fill="#ff6347"/>
<rect x="630" y="370" width="1" height="12" fill="#6495ed"/>
<rect x="629" y="372" width="3" height="7" fill="#6495ed"/>
<rect x="634" y="360" width="1" height="13" fill="#6495ed"/>
<rect x="633" y="366" width="3" height="5" fill="#6495ed"/>
<rect x="638" y="366" width="1" height="13" fill="#ff6347"/>
<rect x="637" y="366" width="3" height="3" fill="#ff6347"/>
<rect x="642" y="370" width="1" height="10" fill="#ff6347"/>
<rect x="641" y="370" width="3" height="8" fill="#ff6347"/>
<rect x="646" y="374" width="1" height="7" fill="#ff6347"/>
<rect x="645" y="378" width="3" height="3" fill="#ff6347"/>
<rect x="650" y="379" width="1" height="24" fill="#ff6347"/>
<rect x="649" y="380" width="3" height="17" fill="#ff6347"/>
<rect x="654" y="385" width="1" height="16" fill="#6495ed"/>
<rect x="653" y="386" width="3" height="15" fill="#6495ed"/>
<rect x="658" y="366" width="1" height="27" fill="#6495ed"/>
<rect x="657" y="372" width="3" height="20" fill="#6495ed"/>
<rect x="662" y="361" width="1" height="15" fill="#6495ed"/>
<rect x="661" y="365" width="3" height="7" fill="#6495ed"/>
<rect x="666" y="363" width="1" height="15" fill="#ff6347"/>
<rect x="665" y="366" width="3" height="10" fill="#ff6347"/>
<rect x="670" y="379" width="1" height="14" fill="#ff6347"/>
<rect x="669" y="379" width="3" height="14" fill="#ff6347"/>
<rect x="674" y="384" width="1" height="16" fill="#ff6347"/>
<rect x="673" y="386" width="3" height="13" fill="#ff6347"/>
<rect x="678" y="284" width="1" height="157" fill="#6495ed"/>
<rect x="677" y="290" width="3" height="148" fill="#6495ed"/>
<rect x="682" y="286" width="1" height="35" fill="#ff6347"/>
<rect x="681" y="289" width="3" height="17" fill="#ff6347"/>
<rect x="686" y="281" width="1" height="30" fill="#6495ed"/>
<rect x="685" y="290" width="3" height="15" fill="#6495ed"/>
<rect x="690" y="255" width="1" height="34" fill="#6495ed"/>
<rect x="689" y="273" width="3" height="16" fill="#6495ed"/>
<rect x="694" y="250" width="1" height="34" fill="#6495ed"/>
<rect x="693" y="250" width="3" height="20" fill="#6495ed"/>
<rect x="698" y="218" width="1" height="32" fill="#6495ed"/>
<rect x="697" y="235" width="3" height="15" fill="#6495ed"/>
<rect x="702" y="221" width="1" height="14" fill="#6495ed"/>
<rect x="701" y="227" width="3" height="8" fill="#6495ed"/>
<rect x="706" y="227" width="1" height="22" fill="#ff6347"/>
<rect x="705" y="227" width="3" height="22" fill="#ff6347"/>
<rect x="710" y="242" width="1" height="24" fill="#ff6347"/>
<rect x="709" y="248" width="3" height="11" fill="#ff6347"/>
<rect x="714" y="260" width="1" height="28" fill="#ff6347"/>
<rect x="713" y="260" width="3" height="24" fill="#ff6347"/>
<rect x="718" y="277" width="1" height="14" fill="#6495ed"/>
<rect x="717" y="280" width="3" height="2" fill="#6495ed"/>
<rect x="722" y="274" width="1" height="13" fill="#ff6347"/>
<rect x="721" y="280" width="3" height="3" fill="#ff6347"/>
<rect x="726" y="249" width="1" height="35" fill="#6495ed"/>
<rect x="725" y="249" width="3" height="35" fill="#6495ed"/>
<rect x="730" y="247" width="1" height="14" fill="#ff6347"/>
<rect x="729" y="250" width="3" height="2" fill="#ff6347"/>
<rect x="734" y="234" width="1" height="19" fill="#6495ed"/>
<rect x="733" y="237" width="3" height="15" fill="#6495ed"/>
<rect x="738" y="230" width="1" height="9" fill="#6495ed"/>
<rect x="737" y="232" width="3" height="6" fill="#6495ed"/>
<rect x="742" y="228" width="1" height="18" fill="#ff6347"/>
<rect x="741" y="234" width="3" height="2" fill="#ff6347"/>
<rect x="746" y="230" width="1" height="9" fill="#6495ed"/>
<rect x="745" y="234" width="3" height="5" fill="#6495ed"/>
<rect x="750" y="222" width="1" height="15" fill="#6495ed"/>
<rect x="749" y="225" width="3" height="10" fill="#6495ed"/>
<rect x="754" y="215" width="1" height="10" fill="#6495ed"/>
<rect x="753" y="217" width="3" height="8" fill="#6495ed"/>
<rect x="758" y="196" width="1" height="21" fill="#6495ed"/>
<rect x="757" y="204" width="3" height="13" fill="#6495ed"/>
<rect x="762" y="189" width="1" height="16" fill="#6495ed"/>
<rect x="761" y="190" width="3" height="15" fill="#6495ed"/>
<rect x="766" y="189" width="1" height="9" fill="#6495ed"/>
<rect x="765" y="191" width="3" height="1" fill="#6495ed"/>
<rect x="770" y="188" width="1" height="10" fill="#ff6347"/>
<rect x="769" y="191" width="3" height="5" fill="#ff6347"/>
<rect x="774" y="191" width="1" height="9" fill="#ff6347"/>
<rect x="773" y="194" width="3" height="6" fill="#ff6347"/>
<rect x="778" y="192" width="1" height="9" fill="#6495ed"/>
<rect x="777" y="192" width="3" height="8" fill="#6495ed"/>
<rect x="782" y="192" width="1" height="10" fill="#ff6347"/>
<rect x="781" y="192" width="3" height="8" fill="#ff6347"/>
<rect x="786" y="194" width="1" height="6" fill="#6495ed"/>
<rect x="785" y="194" width="3" height="6" fill="#6495ed"/>
<rect x="790" y="189" width="1" height="8" fill="#6495ed"/>
<rect x="789" y="192" width="3" height="4" fill="#6495ed"/>
</g>
<rect x="5.5" y="97.5" width="1213" height="354.5" fill="none" stroke="#fff" stroke-width="1"/>
<path d="M787 98 L798 98 L792.5 104 Z" fill="#8898a8" shape-rendering="auto"/>
<rect x="6" y="452" width="1" height="5" fill="#fff"/>
<rect x="102" y="452" width="1" height="5" fill="#fff"/>
<rect x="198" y="452" width="1" height="5" fill="#fff"/>
<rect x="294" y="452" width="1" height="5" fill="#fff"/>
<rect x="390" y="452" width="1" height="5" fill="#fff"/>
<rect x="486" y="452" width="1" height="5" fill="#fff"/>
<rect x="582" y="452" width="1" height="5" fill="#fff"/>
<rect x="678" y="452" width="1" height="5" fill="#fff"/>
<rect x="774" y="452" width="1" height="5" fill="#fff"/>
<rect x="1218" y="139" width="4" height="1" fill="#fff"/>
<rect x="1218" y="238" width="4" height="1" fill="#fff"/>
<rect x="1218" y="286" width="4" height="1" fill="#fff"/>
<rect x="1218" y="335" width="4" height="1" fill="#fff"/>
<rect x="1218" y="384" width="4" height="1" fill="#fff"/>
<rect x="1218" y="433" width="4" height="1" fill="#fff"/>
</svg>
<style>
.ct{position:absolute;white-space:pre;line-height:1;color:#fff;font-size:12.3px}
.pt{position:absolute;white-space:pre;line-height:1;color:#fff;font-size:12px;left:1226px}
.tt{position:absolute;white-space:pre;line-height:1;color:#505050;font-size:14.5px;left:687px}
</style>
<div class="ct" style="left:6px;top:458px">13 Nov 2023</div>
<div class="ct" style="left:102px;top:458px">14 Nov 03:30</div>
<div class="ct" style="left:198px;top:458px">14 Nov 09:30</div>
<div class="ct" style="left:294px;top:458px">14 Nov 15:30</div>
<div class="ct" style="left:390px;top:458px">14 Nov 21:30</div>
<div class="ct" style="left:486px;top:458px">15 Nov 03:30</div>
<div class="ct" style="left:582px;top:458px">15 Nov 09:30</div>
<div class="ct" style="left:678px;top:458px">15 Nov 15:30</div>
<div class="ct" style="left:774px;top:458px">15 Nov 21:30</div>
<div class="pt" style="top:134px">151.665</div>
<div class="pt" style="top:232px">151.140</div>
<div class="pt" style="top:281px">150.880</div>
<div class="pt" style="top:330px">150.620</div>
<div class="pt" style="top:379px">150.360</div>
<div class="pt" style="top:428px">150.100</div>
<div class="a" style="left:1220px;top:184px;width:56px;height:15px;background:#fff"></div>
<div class="pt" style="top:186px;color:#000">151.387</div>
<div class="a" style="left:680px;top:382px;width:351px;height:85px;background:#fff;border:1px solid #767676"></div>
<div class="tt" style="top:388px">EconomicData 2023.11.15</div>
<div class="tt" style="top:408px">22:30</div>
<div class="tt" style="top:408px;left:899px"> 10</div>
<div class="tt" style="top:428px">22:30</div>
<div class="tt" style="top:428px;left:928px"> 10</div>
<div class="tt" style="top:448px">22:30</div>
<svg class="a" style="left:0;top:0" width="1277" height="476"><path transform="translate(725.00,409.0) scale(0.774)" d="M2 2.5 H12 Q10.5 6 7.5 7.5 M7.5 5 Q7.5 11 3.5 13.5" fill="none" stroke="#505050" stroke-width="1.49" stroke-linecap="square"/><path transform="translate(736.00,409.0) scale(0.774)" d="M3 4 Q8 8 12.5 12.5 M11 2 Q9 10 2 13" fill="none" stroke="#505050" stroke-width="1.49" stroke-linecap="square"/><path transform="translate(747.00,409.0) scale(0.774)" d="M4 2.5 V9.5 M10.5 2 V8 Q10.5 12 6 13.5" fill="none" stroke="#505050" stroke-width="1.49" stroke-linecap="square"/><path transform="translate(758.00,409.0) scale(0.774)" d="M1.5 5 H11.5 Q11.5 12.5 8.5 12.5 M6.5 1.5 Q6.5 9.5 2 13.5" fill="none" stroke="#505050" stroke-width="1.49" stroke-linecap="square"/><path d="M781.30 407.60 L783.00 412.65 L788.34 412.71 L784.06 415.90 L785.65 420.99 L781.30 417.90 L776.95 420.99 L778.54 415.90 L774.26 412.71 L779.60 412.65 Z" fill="#505050"/><path d="M796.30 407.60 L798.00 412.65 L803.34 412.71 L799.06 415.90 L800.65 420.99 L796.30 417.90 L791.95 420.99 L793.54 415.90 L789.26 412.71 L794.60 412.65 Z" fill="#505050"/><path d="M811.30 407.60 L813.00 412.65 L818.34 412.71 L814.06 415.90 L815.65 420.99 L811.30 417.90 L806.95 420.99 L808.54 415.90 L804.26 412.71 L809.60 412.65 Z" fill="#505050"/><path transform="translate(823.50,408.5) scale(0.930)" d="M7 1 V12.5 L5.5 13.5 M3.5 5.5 L1 10.5 M10.5 5.5 L13.5 10.5" fill="none" stroke="#505050" stroke-width="1.24" stroke-linecap="square"/><path transform="translate(838.00,408.5) scale(0.930)" d="M7 0.5 V3.5 M1.5 3 H12.5 M4 5.5 H10 M1 7.5 H13 V9.5 M1 7.5 V9.5 M5.5 8.5 Q5.5 12 2 13.5 M8.5 8.5 V12.5 H13" fill="none" stroke="#505050" stroke-width="1.24" stroke-linecap="square"/><path transform="translate(852.50,408.5) scale(0.930)" d="M7 0.5 V3.5 M1.5 3 H12.5 M4 5.5 H10 M1 7.5 H13 V9.5 M1 7.5 V9.5 M5.5 8.5 Q5.5 12 2 13.5 M8.5 8.5 V12.5 H13" fill="none" stroke="#505050" stroke-width="1.24" stroke-linecap="square"/><path transform="translate(867.00,408.5) scale(0.930)" d="M6 1 V12.5 M6 6.5 H11.5 M1 12.5 H13" fill="none" stroke="#505050" stroke-width="1.24" stroke-linecap="square"/><path transform="translate(881.50,408.5) scale(0.930)" d="M7 0.5 V2.5 M1 2.5 H13 M4 4.5 H10 V7 H4 Z M2 13.5 V8.5 H12 V13 L11 13.5 M5 10 H9 V12 H5 Z" fill="none" stroke="#505050" stroke-width="1.24" stroke-linecap="square"/><path transform="translate(920.50,408.5) scale(0.930)" d="M3.5 1.5 V9 Q3.5 12 1.5 13.5 M3.5 1.5 H11 V13 L9.5 13.5 M3.5 5.5 H11 M3.5 9 H11" fill="none" stroke="#505050" stroke-width="1.24" stroke-linecap="square"/><path transform="translate(725.00,429.0) scale(0.774)" d="M2 2.5 H12 Q10.5 6 7.5 7.5 M7.5 5 Q7.5 11 3.5 13.5" fill="none" stroke="#505050" stroke-width="1.49" stroke-linecap="square"/><path transform="translate(736.00,429.0) scale(0.774)" d="M3 4 Q8 8 12.5 12.5 M11 2 Q9 10 2 13" fill="none" stroke="#505050" stroke-width="1.49" stroke-linecap="square"/><path transform="translate(747.00,429.0) scale(0.774)" d="M4 2.5 V9.5 M10.5 2 V8 Q10.5 12 6 13.5" fill="none" stroke="#505050" stroke-width="1.49" stroke-linecap="square"/><path transform="translate(758.00,429.0) scale(0.774)" d="M1.5 5 H11.5 Q11.5 12.5 8.5 12.5 M6.5 1.5 Q6.5 9.5 2 13.5" fill="none" stroke="#505050" stroke-width="1.49" stroke-linecap="square"/><path d="M781.30 427.60 L783.00 432.65 L788.34 432.71 L784.06 435.90 L785.65 440.99 L781.30 437.90 L776.95 440.99 L778.54 435.90 L774.26 432.71 L779.60 432.65 Z" fill="#505050"/><path d="M796.30 428.10 L797.89 432.82 L802.86 432.87 L798.87 435.83 L800.36 440.58 L796.30 437.70 L792.24 440.58 L793.73 435.83 L789.74 432.87 L794.71 432.82 Z" fill="none" stroke="#707070" stroke-width="0.9"/><path d="M811.30 428.10 L812.89 432.82 L817.86 432.87 L813.87 435.83 L815.36 440.58 L811.30 437.70 L807.24 440.58 L808.73 435.83 L804.74 432.87 L809.71 432.82 Z" fill="none" stroke="#707070" stroke-width="0.9"/><path transform="translate(823.50,428.5) scale(0.930)" d="M4 1 Q3 4 1 6 M3 4 H12.5 M7 1 V12.5 M3 8.5 H11.5 M1 12.5 H13" fill="none" stroke="#505050" stroke-width="1.24" stroke-linecap="square"/><path transform="translate(838.00,428.5) scale(0.930)" d="M7 0.5 V2 M2 2 H12 M4.5 3 L5 5 M9.5 3 L9 5 M1.5 5.5 H13 M2.5 5.5 Q2.5 11 1 13.5 M8 6 V13 M4.5 9 H12 M4.5 13 H13 M4.5 11 H12" fill="none" stroke="#505050" stroke-width="1.24" stroke-linecap="square"/><path transform="translate(852.50,428.5) scale(0.930)" d="M6 0.5 V6 M2 3.5 H10 M1 6 H13 M10.5 1.5 L3.5 10 M5 9 H11 V13.5 H5 Z M5 11.2 H11" fill="none" stroke="#505050" stroke-width="1.24" stroke-linecap="square"/><path transform="translate(867.00,428.5) scale(0.930)" d="M3 0.5 V13.5 M1 3 Q1 6 0.5 7.5 M0.5 7 H5.5 M8.5 0.5 Q8 3.5 6.5 5.5 M7.5 3.5 H13 Q13 12.5 11 13 M10.5 4.5 Q9.5 10 7 12.5 M8.5 4 Q8 8 6 10" fill="none" stroke="#505050" stroke-width="1.24" stroke-linecap="square"/><path transform="translate(881.50,428.5) scale(0.930)" d="M4 0.5 Q3 5 1 8 M3 5 V13.5 M6 1.5 H13 M6 5 H13 V13 H6 Z M8.5 5 V13 M10.5 5 V13" fill="none" stroke="#505050" stroke-width="1.24" stroke-linecap="square"/><path transform="translate(896.00,428.5) scale(0.930)" d="M3 0.5 V12.5 L2 13.5 M0.5 4.5 H5.5 M0.5 10.5 L5.5 8 M8 0.5 V4 Q8 5 13 5 M12 1.5 L8.5 3 M8 7 H13 V13.5 H8 Z M8 10.2 H13" fill="none" stroke="#505050" stroke-width="1.24" stroke-linecap="square"/><path transform="translate(910.50,428.5) scale(0.930)" d="M3.5 0.5 V7 M0.5 3 H6.5 M1.5 1 L2.5 2.5 M6 1 L5 2.5 M0.5 7 H6.5 M2.5 8 L5.5 13.5 M5.5 8.5 L0.5 13.5 M9 0.5 Q8.5 4 7.5 6.5 M8 3.5 H13 M12 4 Q11 10 7.5 13.5 M9 6.5 L13.5 13.5" fill="none" stroke="#505050" stroke-width="1.24" stroke-linecap="square"/><path transform="translate(949.50,428.5) scale(0.930)" d="M3.5 1.5 V9 Q3.5 12 1.5 13.5 M3.5 1.5 H11 V13 L9.5 13.5 M3.5 5.5 H11 M3.5 9 H11" fill="none" stroke="#505050" stroke-width="1.24" stroke-linecap="square"/><path transform="translate(725.00,449.0) scale(0.774)" d="M2 2.5 H12 Q10.5 6 7.5 7.5 M7.5 5 Q7.5 11 3.5 13.5" fill="none" stroke="#505050" stroke-width="1.49" stroke-linecap="square"/><path transform="translate(736.00,449.0) scale(0.774)" d="M3 4 Q8 8 12.5 12.5 M11 2 Q9 10 2 13" fill="none" stroke="#505050" stroke-width="1.49" stroke-linecap="square"/><path transform="translate(747.00,449.0) scale(0.774)" d="M4 2.5 V9.5 M10.5 2 V8 Q10.5 12 6 13.5" fill="none" stroke="#505050" stroke-width="1.49" stroke-linecap="square"/><path transform="translate(758.00,449.0) scale(0.774)" d="M1.5 5 H11.5 Q11.5 12.5 8.5 12.5 M6.5 1.5 Q6.5 9.5 2 13.5" fill="none" stroke="#505050" stroke-width="1.49" stroke-linecap="square"/><path d="M781.30 447.60 L783.00 452.65 L788.34 452.71 L784.06 455.90 L785.65 460.99 L781.30 457.90 L776.95 460.99 L778.54 455.90 L774.26 452.71 L779.60 452.65 Z" fill="#505050"/><path d="M796.30 448.10 L797.89 452.82 L802.86 452.87 L798.87 455.83 L800.36 460.58 L796.30 457.70 L792.24 460.58 L793.73 455.83 L789.74 452.87 L794.71 452.82 Z" fill="none" stroke="#707070" stroke-width="0.9"/><path d="M811.30 448.10 L812.89 452.82 L817.86 452.87 L813.87 455.83 L815.36 460.58 L811.30 457.70 L807.24 460.58 L808.73 455.83 L804.74 452.87 L809.71 452.82 Z" fill="none" stroke="#707070" stroke-width="0.9"/><path transform="translate(823.50,449.0) scale(0.759)" d="M2.5 4 H10.5 M1 11.5 H12" fill="none" stroke="#505050" stroke-width="1.52" stroke-linecap="square"/><path transform="translate(834.50,449.0) scale(0.690)" d="M3.5 7.5 H9.5 V12.5 M2.5 12.5 H11" fill="none" stroke="#505050" stroke-width="1.67" stroke-linecap="square"/><path transform="translate(844.50,449.0) scale(0.759)" d="M1 7.5 H12" fill="none" stroke="#505050" stroke-width="1.52" stroke-linecap="square"/><path transform="translate(855.50,449.0) scale(0.759)" d="M2 2.5 H11 V12.5 H2 M3 7.5 H11" fill="none" stroke="#505050" stroke-width="1.52" stroke-linecap="square"/><path transform="translate(866.50,449.0) scale(0.759)" d="M1 7.5 H12" fill="none" stroke="#505050" stroke-width="1.52" stroke-linecap="square"/><path transform="translate(877.50,449.0) scale(0.759)" d="M6 1 Q5 4.5 1.5 7 M5 3.5 H11.5 Q10.5 10 3.5 13.5" fill="none" stroke="#505050" stroke-width="1.52" stroke-linecap="square"/><path transform="translate(888.50,448.5) scale(0.930)" d="M1.5 1 L3 2.5 M1 5.5 H3 V11 Q5 13 13.5 13 M5 2 H13 M5.5 4 H12.5 V9 H5.5 Z M5.5 6.5 H12.5 M4.5 11 H13.5 M9 0.5 V12.5" fill="none" stroke="#505050" stroke-width="1.24" stroke-linecap="square"/><path transform="translate(903.00,448.5) scale(0.930)" d="M3.5 0.5 L1 4.5 M3.5 0.5 L6 3.5 M2 5 H5 M1 8 H6 M3.5 5 V12.5 M1 13 L6 12 M8 1 H13 V8 H8 Z M8 4.5 H13 M8 1 V13 L10.5 12 M10 8 L13.5 13.5" fill="none" stroke="#505050" stroke-width="1.24" stroke-linecap="square"/><path transform="translate(917.50,448.5) scale(0.930)" d="M3.5 0.5 V6.5 M1 2 H6.5 M1 4 H6.5 V6 M9 0.5 V5 M12 0.5 V5 Q12 6 11 6 M7 7.5 H13.5 M7 7.5 L1.5 13.5 M7 8.5 V13.5 M8.5 10 L13.5 13.5 M10.5 8.5 L12.5 9.5" fill="none" stroke="#505050" stroke-width="1.24" stroke-linecap="square"/><path transform="translate(932.00,448.5) scale(0.930)" d="M1.5 1 L3 2.5 M1 5.5 H3 V11 Q5 13 13.5 13 M8.5 0.5 V6 M5.5 3 H12.5 M4.5 6 H13.5 M6 8 H12 V11 H6 Z" fill="none" stroke="#505050" stroke-width="1.24" stroke-linecap="square"/><path transform="translate(946.50,448.5) scale(0.930)" d="M4 0.5 L5 2 M10 0.5 L9 2 M7 0.5 V3 M2 3 H12 M3 5 H11 M1 7 H13 M3 9 H11 M7 3 V13.5 M7 10 L1.5 13 M7 10 L12.5 13" fill="none" stroke="#505050" stroke-width="1.24" stroke-linecap="square"/><path transform="translate(961.00,448.5) scale(0.930)" d="M3 0.5 H11 V5 H3 Z M3 2.8 H11 M7 5 V6 M1 6 H13 M4 7.5 H10 V10 H4 Z M7 10 V13 L6 13.5 M4 11 L2 13.5 M10 11 L12 13.5" fill="none" stroke="#505050" stroke-width="1.24" stroke-linecap="square"/><path transform="translate(975.50,448.5) scale(0.930)" d="M4 0.5 Q3 3 1 5 M3 2 H12 M3 4.5 H11 M2 7 H11 Q11 12 13.5 13.5 M4 8 L8 12 M8 8 L4 12" fill="none" stroke="#505050" stroke-width="1.24" stroke-linecap="square"/><path transform="translate(990.00,448.5) scale(0.930)" d="M3 0.5 V12.5 L2 13.5 M0.5 4.5 H5.5 M0.5 10.5 L5.5 8 M8 0.5 V4 Q8 5 13 5 M12 1.5 L8.5 3 M8 7 H13 V13.5 H8 Z M8 10.2 H13" fill="none" stroke="#505050" stroke-width="1.24" stroke-linecap="square"/><path transform="translate(1004.50,448.5) scale(0.930)" d="M3.5 0.5 V7 M0.5 3 H6.5 M1.5 1 L2.5 2.5 M6 1 L5 2.5 M0.5 7 H6.5 M2.5 8 L5.5 13.5 M5.5 8.5 L0.5 13.5 M9 0.5 Q8.5 4 7.5 6.5 M8 3.5 H13 M12 4 Q11 10 7.5 13.5 M9 6.5 L13.5 13.5" fill="none" stroke="#505050" stroke-width="1.24" stroke-linecap="square"/></svg>

<style>
.pn{position:absolute;display:flex;align-items:center;justify-content:center;white-space:pre;line-height:1;color:#00008b;font-size:12px;overflow:hidden}
.gb{background:#d3d3d3;border-right:2px solid #a9a9a9;border-bottom:2px solid #a9a9a9;border-top:1px solid #e6e6e6;border-left:1px solid #e6e6e6}
.yb{background:#fafad2;border-right:2px solid #dcdcb8;border-bottom:2px solid #dcdcb8;border-top:1px solid #fdfdf0;border-left:1px solid #fdfdf0}
.wb{background:#fdf9f9}
.bb{background:#fdf9f9;border-right:2px solid #606060;border-bottom:2px solid #606060;border-top:1px solid #fff;border-left:1px solid #fff;font-size:9.5px}
</style>
<div class="a" style="left:5px;top:97px;width:217px;height:252px;background:#f0f0f0;border:1px solid #fff;border-left-width:2px;border-top-width:2px;box-shadow:inset 1px 1px 0 #cfcfcf, inset -1px -1px 0 #cfcfcf"></div>
<div class="t" style="left:12px;top:102px;font-size:16.5px;color:#1c1c3c">OneClickFX_training</div>
<div class="a" style="left:185px;top:113px;width:10px;height:2px;background:#9a9a9a"></div>
<svg class="a" style="left:204px;top:106px" width="11" height="11"><path d="M1.5 1.5 L9.5 9.5 M9.5 1.5 L1.5 9.5" stroke="#9a9a9a" stroke-width="2"/></svg>
<div class="pn" style="left:10px;top:122px;width:104px;height:31px;background:#a52a2a;border-top:1px solid #c85050;border-left:1px solid #c85050;color:#fff;font-size:19.5px;padding-top:2px"><span style="display:inline-block;transform:scaleX(0.86)">SELL</span></div>
<div class="pn" style="left:114px;top:122px;width:104px;height:31px;background:#4169e1;border-top:2px solid #6a90ff;color:#fff;font-size:19.5px;padding-top:1px"><span style="display:inline-block;transform:scaleX(0.93)">BUY</span></div>
<div class="a wb" style="left:10px;top:153px;width:208px;height:16px"></div>
<div class="pn" style="left:10px;top:155px;width:87px;height:14px;font-size:9.5px;font-weight:bold">151.387</div>
<div class="pn" style="left:129px;top:155px;width:89px;height:14px;font-size:9.5px;font-weight:bold">151.389</div>
<div class="pn wb" style="left:97px;top:143px;width:32px;height:20px;font-size:12px;box-shadow:1px 1px 0 #eeeaea">0.2</div>
<div class="pn gb" style="left:12px;top:171px;width:67px;height:20px">LINE</div>
<div class="pn gb" style="left:80px;top:171px;width:68px;height:20px">ORDER</div>
<div class="pn gb" style="left:150px;top:171px;width:68px;height:20px">LINE</div>
<div class="pn yb" style="left:12px;top:193px;width:32px;height:19px">/2</div>
<div class="pn yb" style="left:46px;top:193px;width:23px;height:19px">-</div>
<div class="pn wb" style="left:70px;top:192px;width:87px;height:20px">Vol:0.1</div>
<div class="pn yb" style="left:159px;top:193px;width:24px;height:19px">+</div>
<div class="pn yb" style="left:185px;top:193px;width:33px;height:19px">x2</div>
<div class="pn gb" style="left:12px;top:214px;width:50px;height:17px">OFF</div>
<div class="pn yb" style="left:64px;top:214px;width:14px;height:17px">-</div>
<div class="pn wb" style="left:79px;top:213px;width:69px;height:18px">TS: 10</div>
<div class="pn yb" style="left:150px;top:214px;width:16px;height:17px">+</div>
<div class="pn gb" style="left:168px;top:214px;width:50px;height:17px">NONE</div>
<div class="pn" style="left:10px;top:232px;width:208px;height:17px;background:#eef6fe;border:1px solid #c8c8c8;font-size:11px">SELLx0 +0.0% | BUYx0 +0.0%</div>
<div class="pn" style="left:10px;top:249px;width:32px;height:21px;background:#c86464;border-top:2px solid #e08a8a;border-left:2px solid #e08a8a;color:#fff;font-size:11.5px">SELL</div>
<div class="pn" style="left:42px;top:249px;width:40px;height:21px;background:#4a80b2;border-top:2px solid #5a92c8;border-right:2px solid #2f5f8f;border-bottom:2px solid #3a6a9a;color:#fff;font-size:11.5px">50%</div>
<div class="pn" style="left:82px;top:249px;width:65px;height:21px;background:#4a80b2;border-top:2px solid #5a92c8;border-left:1px solid #6aa0d8;border-right:2px solid #2f5f8f;border-bottom:2px solid #3a6a9a;color:#fff;font-size:11.5px">CLOSE</div>
<div class="pn" style="left:147px;top:249px;width:38px;height:21px;background:#4a80b2;border-top:2px solid #5a92c8;border-left:1px solid #6aa0d8;border-right:2px solid #2f5f8f;border-bottom:2px solid #3a6a9a;color:#fff;font-size:11.5px">30%</div>
<div class="pn" style="left:185px;top:249px;width:33px;height:21px;background:#7e98e6;border-top:2px solid #9ab0fa;border-left:2px solid #9ab0fa;color:#fff;font-size:11.5px">BUY</div>
<div class="a wb" style="left:10px;top:270px;width:208px;height:39px;border:1px solid #c8c8c8;border-top:none"></div>
<div class="a" style="left:113px;top:270px;width:1px;height:20px;background:#c8c8c8"></div>
<div class="a" style="left:10px;top:289px;width:208px;height:1px;background:#c8c8c8"></div>
<div class="pn" style="left:10px;top:271px;width:103px;height:18px;font-size:10.5px">0.00USD</div>
<div class="pn" style="left:114px;top:271px;width:104px;height:18px;font-size:10.5px">0.0pips</div>
<div class="pn" style="left:10px;top:290px;width:208px;height:18px;font-size:11.5px">TODAY: -- --</div>
<div class="pn" style="left:10px;top:308px;width:208px;height:22px;background:#eef6fe;border:1px solid #c8c8c8;border-top:1px solid #d0d0d0;font-size:16px;padding-left:0px;padding-top:2px">2023/11/16  05:42:30</div>
<div class="pn bb" style="left:11px;top:330px;width:51px;height:15px">ORDER</div>
<div class="pn bb" style="left:63px;top:330px;width:50px;height:15px">CLOSE</div>
<div class="pn bb" style="left:115px;top:330px;width:51px;height:15px">RESULT</div>
<div class="pn bb" style="left:167px;top:330px;width:51px;height:15px">CONFIG</div>
<div class="pn yb" style="left:10px;top:356px;width:34px;height:24px;font-size:12px">ON</div>
<div class="pn gb" style="left:45px;top:356px;width:33px;height:24px;font-size:13px">| |</div>
<div class="pn wb" style="left:78px;top:356px;width:69px;height:24px;font-size:11px">SPEED x60</div>
<div class="pn yb" style="left:148px;top:356px;width:24px;height:24px;font-size:14px">/2</div>
<div class="pn yb" style="left:172px;top:356px;width:25px;height:24px;font-size:14px">x2</div>
<div class="pn yb" style="left:197px;top:356px;width:21px;height:24px;font-size:14px">&gt;1</div>


<!-- TESTER -->
<div id="tester" class="a"></div>
<style>
.tl{position:absolute;white-space:pre;line-height:1;font-size:14px;color:#6a6a6a}
.cb{position:absolute;background:#cccccc;border:1px solid #c2c2c2}
.cw{position:absolute;background:#f0f0f0;border:1px solid #c4c4c4;box-shadow:inset 0 0 0 1px #fff}
.chev{position:absolute;width:6px;height:6px;border-right:1px solid #9a9a9a;border-bottom:1px solid #9a9a9a;transform:rotate(45deg)}
.bt{position:absolute;background:#efefef;border:1px solid #adadad;display:flex;align-items:center;justify-content:center;font-size:14px;color:#6a6a6a;white-space:pre;line-height:1}
.fd{position:absolute;background:#fff;border:1px solid #808080}
.tab{position:absolute;top:714px;font-size:16px;color:#7a7a7a;white-space:pre;line-height:1}
.tsep{position:absolute;top:711px;width:1px;height:22px;background:#7a7a7a}
</style>
<svg class="a" style="left:6px;top:483px" width="11" height="11"><path d="M1.5 1.5 L9.5 9.5 M9.5 1.5 L1.5 9.5" stroke="#000" stroke-width="1.6"/></svg>
<div class="a" style="left:4px;top:500px;width:16px;height:239px;background:linear-gradient(90deg,#c9d9e9,#d6e3ef)"></div>

<div class="t" style="left:-8px;top:709px;font-size:14px;color:#1a1a1a;transform:rotate(-90deg);transform-origin:center;width:40px;text-align:center">Tester</div>
<div class="a" style="left:21px;top:482px;width:1256px;height:255px;background:#fff;border-left:1px solid #a8a8a8;border-top:1px solid #a8a8a8"></div>
<!-- row 1 -->
<div class="cb" style="left:31px;top:494px;width:150px;height:23px"></div>
<div class="tl" style="left:35px;top:500px;color:#777">Expert Advisor</div>
<div class="chev" style="left:167px;top:502px"></div>
<div class="cw" style="left:190px;top:494px;width:880px;height:23px"></div>
<div class="a" style="left:1046px;top:495px;width:23px;height:21px;background:#fff"></div>
<div class="tl" style="left:194px;top:498px;color:#5a5a5a;font-size:13.7px">OneClickFX_training.ex4</div>
<div class="chev" style="left:1055px;top:501px"></div>
<!-- row 2 -->
<div class="tl" style="left:132px;top:535px;font-size:13.5px">Symbol:</div>
<div class="cb" style="left:190px;top:528px;width:562px;height:23px"></div>
<div class="tl" style="left:194px;top:534px;color:#777;font-size:14.2px;letter-spacing:0.1px">USDJPY, US Dollar vs Japanese Yen</div>
<div class="chev" style="left:737px;top:535px"></div>
<div class="tl" style="left:867px;top:535px">Period:</div>
<div class="cb" style="left:920px;top:528px;width:150px;height:23px;background:#c8c8c8"></div>
<div class="tl" style="left:924px;top:534px;color:#777">M15</div>
<div class="chev" style="left:1055px;top:535px"></div>
<!-- row 3 -->
<div class="tl" style="left:140px;top:569px;font-size:13.5px">Model:</div>
<div class="cb" style="left:190px;top:562px;width:562px;height:23px"></div>
<div class="tl" style="left:193px;top:568px;color:#777;font-size:14px;letter-spacing:0.27px">Control points (a very crude method based on the nearest less timeframe, the resu</div>
<div class="chev" style="left:737px;top:569px"></div>
<div class="tl" style="left:864px;top:569px">Spread:</div>
<div class="cw" style="left:920px;top:562px;width:150px;height:23px"></div>
<div class="a" style="left:1046px;top:563px;width:23px;height:21px;background:#fff"></div>
<div class="tl" style="left:924px;top:568px;color:#6a6a6a">2</div>
<div class="chev" style="left:1055px;top:569px"></div>
<!-- row 4 -->
<div class="tl" style="left:107px;top:607px">Use date</div>
<div class="a" style="left:167px;top:602px;width:23px;height:23px;border:1px solid #7a7a7a;background:#fff"></div>
<div class="tl" style="left:305px;top:602px">From:</div>
<div class="fd" style="left:349px;top:596px;width:150px;height:25px"></div>
<div class="tl" style="left:350px;top:603px;color:#7a7a7a">2023.01.20</div>
<div class="tl" style="left:638px;top:602px">To:</div>
<div class="fd" style="left:667px;top:596px;width:150px;height:25px"></div>
<div class="tl" style="left:668px;top:603px;color:#7a7a7a">2023.11.06</div>
<div class="tl" style="left:967px;top:607px">Optimization</div>
<div class="a" style="left:1046px;top:601px;width:24px;height:24px;border:1px solid #7a7a7a;background:#fff"></div>
<!-- row 5 -->
<div class="tl" style="left:88px;top:641px;font-size:13.7px">Visual mode</div>
<div class="a" style="left:167px;top:636px;width:23px;height:23px;border:1px solid #7a7a7a;background:#fff"></div>
<svg class="a" style="left:171px;top:639px" width="14" height="12"><path d="M1.5 6 L5 9.5 L12 1.5" stroke="#000" stroke-width="2.4" fill="none"/></svg>
<div class="a" style="left:206px;top:638px;width:209px;height:15px;border:1px solid #a0a0a0;background:#fafafa"></div>
<div class="a" style="left:401px;top:633px;width:13px;height:25px;border:1px solid #8a8a8a;background:#e8e8e8"></div>
<div class="bt" style="left:432px;top:630px;width:29px;height:29px;color:#000"></div>
<div class="a" style="left:441px;top:637px;width:1px;height:14px;background:#000"></div>
<div class="a" style="left:450px;top:637px;width:1px;height:14px;background:#000"></div>
<div class="bt" style="left:470px;top:630px;width:188px;height:29px;color:#000">Skip to</div>
<div class="fd" style="left:667px;top:630px;width:150px;height:25px"></div>
<div class="tl" style="left:668px;top:636px;color:#000">2023.12.06</div>
<!-- calendar icons -->
<svg class="a" style="left:0;top:0" width="1277" height="747">
<g fill="#f6f6f6" stroke="#c8c8c8" stroke-width="1"><rect x="466.5" y="601.5" width="13" height="13"/><rect x="784.5" y="601.5" width="13" height="13"/></g>
<g stroke="#dcdcdc" stroke-width="1"><path d="M470 602 V614 M473 602 V614 M476 602 V614 M467 605 H479 M467 608 H479 M467 611 H479"/><path d="M788 602 V614 M791 602 V614 M794 602 V614 M785 605 H797 M785 608 H797 M785 611 H797"/></g>
<path d="M482 606 H491 L486.5 611 Z" fill="#c8c8c0"/><path d="M800 606 H809 L804.5 611 Z" fill="#c8c8c0"/>
<rect x="784.5" y="635.5" width="13" height="13" fill="#eeeef2" stroke="#6a6a6a"/>
<path d="M788 636 V648 M791 636 V648 M794 636 V648 M785 639 H797 M785 642 H797 M785 645 H797" stroke="#b0b0c0"/>
<path d="M800 640 H809 L804.5 645 Z" fill="#3a5a8a"/>
</svg>
<!-- progress -->
<div class="a" style="left:31px;top:672px;width:1039px;height:25px;background:#e3e3e3;border:1px solid #bcbcbc"></div>
<div class="a" style="left:32px;top:673px;width:330px;height:23px;background:#06aa2a"></div>
<!-- right buttons -->
<div class="bt" style="left:1079px;top:492px;width:188px;height:29px">Expert properties</div>
<div class="bt" style="left:1079px;top:527px;width:188px;height:28px">Symbol properties</div>
<div class="bt" style="left:1079px;top:560px;width:188px;height:29px">Open chart</div>
<div class="bt" style="left:1079px;top:594px;width:188px;height:29px">Modify expert</div>
<div class="bt" style="left:1079px;top:670px;width:188px;height:29px;color:#000;font-weight:bold;font-size:15px">Stop</div>
<!-- tabs -->
<div class="a" style="left:21px;top:708px;width:1256px;height:29px;background:#f0f0f0"></div>
<div class="a" style="left:22px;top:708px;width:1255px;height:1px;background:#000"></div>
<div class="a" style="left:21px;top:709px;width:3px;height:28px;background:#fff"></div>
<div class="a" style="left:24px;top:708px;width:85px;height:29px;background:#fff;border:1px solid #000;border-top:none"></div>
<div class="a" style="left:21px;top:709px;width:1px;height:28px;background:#a8a8a8"></div>
<div class="t" style="left:37px;top:713px;font-size:16.5px;color:#000">Settings</div>
<div class="tab" style="left:122px;font-size:15.5px">Results</div>
<div class="tsep" style="left:186px"></div>
<div class="tab" style="left:199px">Graph</div>
<div class="tsep" style="left:255px"></div>
<div class="tab" style="left:268px">Report</div>
<div class="tsep" style="left:329px"></div>
<div class="tab" style="left:342px">Journal</div>
<div class="tsep" style="left:408px"></div>
<div class="a" style="left:0;top:737px;width:1277px;height:6px;background:#f0f0f0"></div>
<div class="a" style="left:0;top:743px;width:1277px;height:1px;background:#a0a0a0"></div>
<div class="a" style="left:0;top:744px;width:1277px;height:1px;background:#fff"></div>
<div class="a" style="left:0;top:745px;width:1277px;height:2px;background:#2c7a99"></div>

<div class="lb"></div>
</body></html>
